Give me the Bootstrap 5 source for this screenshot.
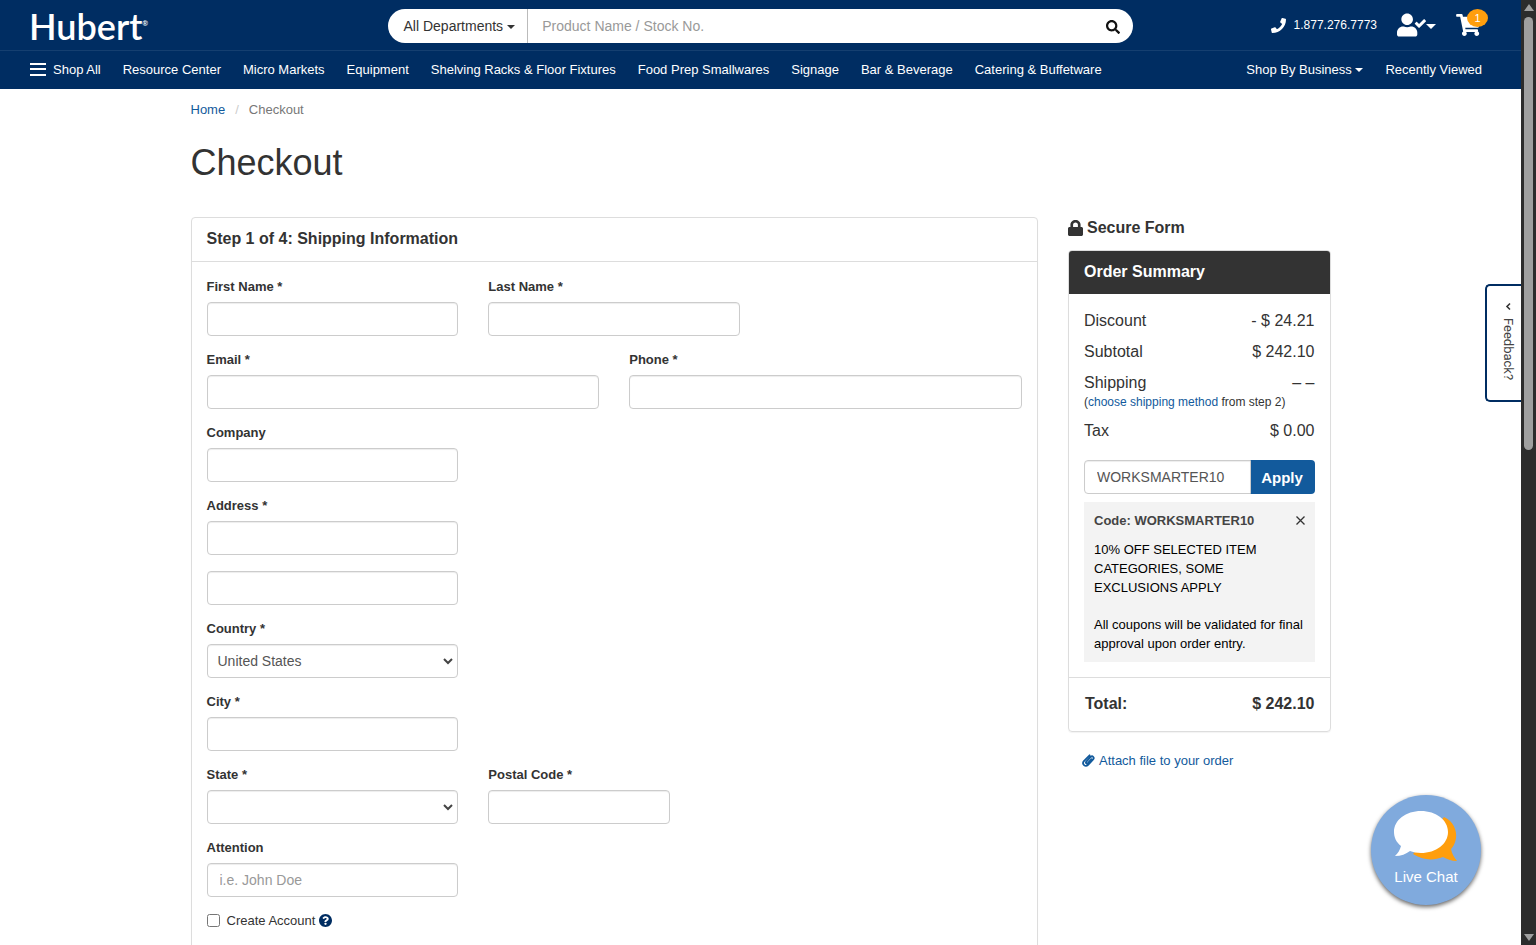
<!DOCTYPE html>
<html lang="en">
<head>
<meta charset="utf-8">
<meta name="viewport" content="width=device-width, initial-scale=1">
<title>Checkout | Hubert</title>
<link href="https://cdn.jsdelivr.net/npm/bootstrap@5.3.0/dist/css/bootstrap.min.css" rel="stylesheet">
<style>
:root { --navy: #002d62; --link: #125a9c; --ink: #333; }
body { font-family: "Liberation Sans", Arial, sans-serif; font-size: 13px; line-height: 19px; color: var(--ink); }
a { color: var(--link); text-decoration: none; }
svg { flex-shrink: 0; }
.shell-view { min-width: 0; }

/* header */
.site-head { background: var(--navy); color: #fff; }
.site-head a, .site-head .plain-btn { color: #fff; }
.head-top { height: 51px; border-bottom: 1px solid #153f70; }
.brand { font-family: Lato, sans-serif; font-weight: 600; font-size: 36px; line-height: 52px; padding-left: 21px; }
.brand sup { font-size: 7px; top: -14px; }
.plain-btn { background: none; border: 0; padding: 0; }
.search-bar { height: 34px; border-radius: 17px; background: #fff; overflow: hidden; }
.search-bar .dept-btn { width: 140px; font-size: 14px; color: var(--ink); border-right: 1px solid #bbb; padding-left: 3px; }
.search-bar input { border: 0; font-size: 14px; padding: 0 14px; height: 34px; }
.search-bar input::placeholder, .field::placeholder { color: #999; opacity: 1; }
.search-bar .go-btn { width: 40px; }
.caret { display: inline-block; border: 4px solid transparent; border-top-color: currentColor; border-bottom: 0; vertical-align: middle; }
.caret-lg { border-width: 5px 5px 0; }
.tools { padding: 0 24px 2px 0; }
.tel-link { font-size: 12px; }
.cart-count { position: absolute; top: -5px; left: 15px; width: 21px; height: 18px; line-height: 18px; border-radius: 50%; background: #ff9e0d; font-size: 11px; text-align: center; }
.head-nav { height: 38px; padding: 0 39px 2px 30px; gap: 22px; white-space: nowrap; }
.bars { width: 16px; height: 13px; margin-right: 7px; border: solid #fff; border-width: 2px 0; background: linear-gradient(#fff, #fff) center / 100% 2px no-repeat; }

/* page */
.page { max-width: 1170px; padding: 0 15px; }
.row-30 { --bs-gutter-x: 30px; }
.crumbs { padding-top: 11px; margin-bottom: 24px; --bs-breadcrumb-item-padding-x: 10px; --bs-breadcrumb-divider-color: #ccc; --bs-breadcrumb-item-active-color: #777; }
h1 { font-size: 36px; line-height: 40px; font-weight: 400; margin-bottom: 34px; }
.panel { border: 1px solid #ddd; border-radius: 4px; box-shadow: 0 1px 1px rgba(0,0,0,.05); }
.panel-top { border-bottom: 1px solid #ddd; padding: 10px 15px 12px; }
.title-md { font-size: 16px; line-height: 21px; font-weight: 700; margin: 0; }
.panel-fields { padding: 15px; }
.group { margin-bottom: 14px; }
.group label { font-weight: 700; display: block; margin-bottom: 6px; }
.field { height: 34px; border: 1px solid #ccc; border-radius: 4px; font-size: 14px; line-height: 20px; color: #555; padding: 6px 12px; box-shadow: inset 0 1px 1px rgba(0,0,0,.075); }
select.field { padding: 6px 30px 6px 10px; background-position: right 3px center; background-size: 12px 12px;
  background-image: url("data:image/svg+xml,%3Csvg xmlns='http://www.w3.org/2000/svg' viewBox='0 0 12 12'%3E%3Cpath d='M2 4l4 4 4-4' fill='none' stroke='%23444' stroke-width='2'/%3E%3C/svg%3E"); }
.tick { width: 13px; height: 13px; margin: 0 7px 0 0; }

/* summary */
.secure { padding-bottom: 12px; gap: 4px; }
.summary-top { background: var(--ink); color: #fff; padding: 10px 15px 12px; border-radius: 3px 3px 0 0; }
.sum-line { font-size: 16px; line-height: 21px; margin-bottom: 10px; }
.sum-body { padding: 16px 15px 15px; }
.note-line { font-size: 12px; line-height: 17px; margin: -9px 0 9px; }
.code-entry { margin-top: 19px; }
.apply-btn { background: var(--link); color: #fff; border: 0; border-radius: 4px; font-size: 15px; font-weight: 700; width: 65px; }
.coupon { background: #f3f3f3; color: #000; margin-top: 8px; padding: 9px 10px; }
.coupon-top { color: #444; margin-bottom: 10px; }
.coupon-text { margin-bottom: 18px; }
.sum-total { border-top: 1px solid #ddd; padding: 15px 15px 17px 16px; }
.attach { padding: 19px 14px; gap: 4px; }

/* floating parts */
.feedback-tab { position: absolute; right: 15px; top: 284px; width: 36px; height: 118px; border: 2px solid var(--navy); border-right: 0; border-radius: 5px 0 0 5px; background: #fff; color: #444; font-family: Roboto, sans-serif; font-size: 13px; writing-mode: vertical-rl; padding: 16px 0 0 8px; gap: 7px; }
.chat-btn { position: absolute; right: 55px; bottom: 40px; width: 110px; height: 110px; border: 0; border-radius: 50%; background: #80aadd; color: #fff; font-size: 15px; box-shadow: 0 2px 4px rgba(0,0,0,.6); padding: 0 0 4px; }
.scroll-rail { width: 15px; background: #2c2c2c; padding: 0 0 4px; }
.scroll-thumb { width: 9px; height: 46%; background: #9f9f9f; border-radius: 5px; margin-top: 6px; }
.tri { border: solid transparent; border-width: 0 5px 7px; border-bottom-color: #9f9f9f; }
.tri-down { border-width: 7px 5px 0; border-top-color: #9f9f9f; }
</style>
</head>
<body>
<div class="d-flex vh-100 overflow-hidden position-relative">
<div class="shell-view flex-grow-1 overflow-hidden">
  <header class="site-head">
    <div class="head-top row gx-3 mx-0 align-items-center">
      <div class="col-3"><a href="#" class="brand d-block">Hubert<sup>®</sup></a></div>
      <div class="col-6">
        <form class="search-bar d-flex">
          <button type="button" class="plain-btn dept-btn flex-shrink-0">All Departments <span class="caret"></span></button>
          <input type="text" class="flex-grow-1" placeholder="Product Name / Stock No." aria-label="Product Name / Stock No.">
          <button type="button" class="plain-btn go-btn" aria-label="Search"><svg width="14" height="14" viewBox="0 0 512 512" fill="#111"><path d="M505 442.700L405.300 343c-4.500-4.500-10.600-7-17-7H372c27.600-35.300 44-79.700 44-128C416 93.100 322.900 0 208 0S0 93.100 0 208s93.100 208 208 208c48.300 0 92.700-16.400 128-44v16.300c0 6.400 2.500 12.500 7 17l99.700 99.700c9.400 9.400 24.600 9.400 33.900 0l28.300-28.300c9.400-9.400 9.400-24.600.1-34zM208 336c-70.700 0-128-57.200-128-128 0-70.700 57.200-128 128-128 70.700 0 128 57.200 128 128 0 70.700-57.200 128-128 128z"/></svg></button>
        </form>
      </div>
      <div class="col-3">
        <div class="tools d-flex justify-content-end align-items-center">
          <a href="#" class="tel-link d-flex align-items-center gap-2"><svg width="15" height="15" viewBox="0 0 512 512" fill="#fff"><path d="M493.400 24.600l-104-24c-11.300-2.600-22.900 3.300-27.500 13.900l-48 112c-4.200 9.800-1.400 21.300 6.900 28l60.600 49.600c-36 76.700-98.900 140.500-177.200 177.200l-49.600-60.600c-6.800-8.300-18.200-11.100-28-6.900l-112 48C3.900 366.500-2 378.100.6 389.400l24 104C27.100 504.200 36.700 512 48 512c256.100 0 464-207.500 464-464 0-11.200-7.700-20.900-18.600-23.400z"/></svg>1.877.276.7773</a>
          <button type="button" class="plain-btn d-flex align-items-end ms-3 ps-1" aria-label="Account"><svg width="29" height="24" viewBox="0 0 640 512" fill="#fff"><path d="M224 256c70.700 0 128-57.300 128-128S294.700 0 224 0 96 57.300 96 128s57.300 128 128 128zm89.600 32h-16.700c-22.200 10.200-46.900 16-72.900 16s-50.600-5.800-72.900-16h-16.700C60.200 288 0 348.200 0 422.400V464c0 26.500 21.500 48 48 48h352c26.500 0 48-21.500 48-48v-41.600c0-74.200-60.200-134.400-134.400-134.400zM636.600 159.600l-27.800-28.200c-4.700-4.700-12.300-4.700-17 0l-104.800 104-45.500-45.800c-4.700-4.700-12.300-4.700-17 0l-28.100 27.900c-4.700 4.700-4.700 12.300 0 17l81.700 82.300c4.700 4.700 12.300 4.700 17 0l141.300-140.200c4.600-4.700 4.700-12.300.2-17z"/></svg><span class="caret caret-lg mb-2"></span></button>
          <a href="#" class="position-relative ms-3 ps-1 me-2 d-block" aria-label="Cart"><svg class="d-block" width="25" height="22" viewBox="0 0 576 512" fill="#fff"><path d="M528.120 301.319l47.273-208C578.806 78.301 567.391 64 551.990 64H159.208l-9.166-44.810C147.758 8.021 137.930 0 126.529 0H24C10.745 0 0 10.745 0 24v16c0 13.255 10.745 24 24 24h69.883l70.248 343.435C147.325 417.100 136 435.222 136 456c0 30.928 25.072 56 56 56s56-25.072 56-56c0-15.674-6.447-29.835-16.824-40h209.647C430.447 426.165 424 440.326 424 456c0 30.928 25.072 56 56 56s56-25.072 56-56c0-22.172-12.888-41.332-31.579-50.405l5.517-24.276c3.413-15.018-8.002-29.319-23.403-29.319H218.117l-6.545-32h293.145c11.206 0 20.920-7.754 23.403-18.681z"/></svg><span class="cart-count">1</span></a>
        </div>
      </div>
    </div>
    <nav class="head-nav d-flex align-items-center">
      <a href="#" class="d-flex align-items-center"><span class="bars"></span>Shop All</a>
      <a href="#">Resource Center</a>
      <a href="#">Micro Markets</a>
      <a href="#">Equipment</a>
      <a href="#">Shelving Racks &amp; Floor Fixtures</a>
      <a href="#">Food Prep Smallwares</a>
      <a href="#">Signage</a>
      <a href="#">Bar &amp; Beverage</a>
      <a href="#">Catering &amp; Buffetware</a>
      <button type="button" class="plain-btn ms-auto">Shop By Business <span class="caret"></span></button>
      <a href="#">Recently Viewed</a>
    </nav>
  </header>

  <main class="page mx-auto">
    <ol class="breadcrumb crumbs">
      <li class="breadcrumb-item"><a href="#">Home</a></li>
      <li class="breadcrumb-item active" aria-current="page">Checkout</li>
    </ol>
    <h1>Checkout</h1>
    <div class="row row-30">
      <div class="col-9">
        <form class="panel">
          <div class="panel-top"><h2 class="title-md">Step 1 of 4: Shipping Information</h2></div>
          <div class="panel-fields">
            <div class="row row-30">
              <div class="col-4 group"><label for="fn">First Name *</label><input id="fn" type="text" class="form-control field"></div>
              <div class="col-4 group"><label for="ln">Last Name *</label><input id="ln" type="text" class="form-control field"></div>
            </div>
            <div class="row row-30">
              <div class="col-6 group"><label for="em">Email *</label><input id="em" type="email" class="form-control field"></div>
              <div class="col-6 group"><label for="ph">Phone *</label><input id="ph" type="tel" class="form-control field"></div>
            </div>
            <div class="row row-30"><div class="col-4 group"><label for="co">Company</label><input id="co" type="text" class="form-control field"></div></div>
            <div class="row row-30"><div class="col-4 group mb-3"><label for="ad">Address *</label><input id="ad" type="text" class="form-control field"></div></div>
            <div class="row row-30"><div class="col-4 group"><input type="text" class="form-control field" aria-label="Address line 2"></div></div>
            <div class="row row-30"><div class="col-4 group"><label for="cn">Country *</label><select id="cn" class="form-select field"><option>United States</option></select></div></div>
            <div class="row row-30"><div class="col-4 group"><label for="ci">City *</label><input id="ci" type="text" class="form-control field"></div></div>
            <div class="row row-30">
              <div class="col-4 group"><label for="st">State *</label><select id="st" class="form-select field"><option></option></select></div>
              <div class="col-3 group"><label for="pc">Postal Code *</label><input id="pc" type="text" class="form-control field"></div>
            </div>
            <div class="row row-30"><div class="col-4 group"><label for="at">Attention</label><input id="at" type="text" class="form-control field" placeholder="i.e. John Doe"></div></div>
            <div class="d-flex align-items-center group">
              <input type="checkbox" class="tick" id="ca"><label for="ca" class="fw-normal mb-0 me-1">Create Account</label>
              <svg width="13" height="13" viewBox="8 8 496 496" fill="#002d62"><path d="M504 256c0 136.997-111.043 248-248 248S8 392.997 8 256C8 119.083 119.043 8 256 8s248 111.083 248 248zM262.655 90c-54.497 0-89.255 22.957-116.549 63.758-3.536 5.286-2.353 12.415 2.715 16.258l34.699 26.310c5.205 3.947 12.621 3.008 16.665-2.122 17.864-22.658 30.113-35.797 57.303-35.797 20.429 0 45.698 13.148 45.698 32.958 0 14.976-12.363 22.667-32.534 33.976C247.128 238.528 216 254.941 216 296v4c0 6.627 5.373 12 12 12h56c6.627 0 12-5.373 12-12v-1.333c0-28.462 83.186-29.647 83.186-106.667 0-58.002-60.165-102-116.531-102zM256 338c-25.365 0-46 20.635-46 46 0 25.364 20.635 46 46 46s46-20.636 46-46c0-25.365-20.635-46-46-46z"/></svg>
            </div>
          </div>
        </form>
      </div>
      <aside class="col-3">
        <div class="secure d-flex align-items-center"><svg width="15" height="16" viewBox="0 0 448 512" preserveAspectRatio="none" fill="#333"><path d="M400 224h-24v-72C376 68.200 307.800 0 224 0S72 68.200 72 152v72H48c-26.500 0-48 21.500-48 48v192c0 26.500 21.500 48 48 48h352c26.500 0 48-21.500 48-48V272c0-26.500-21.500-48-48-48zm-104 0H152v-72c0-39.700 32.300-72 72-72s72 32.300 72 72v72z"/></svg><h2 class="title-md">Secure Form</h2></div>
        <div class="panel">
          <div class="summary-top"><h2 class="title-md">Order Summary</h2></div>
          <div class="sum-body">
            <div class="sum-line d-flex justify-content-between"><span>Discount</span><span>- $ 24.21</span></div>
            <div class="sum-line d-flex justify-content-between"><span>Subtotal</span><span>$ 242.10</span></div>
            <div class="sum-line d-flex justify-content-between"><span>Shipping</span><span>– –</span></div>
            <div class="note-line">(<a href="#">choose shipping method</a> from step 2)</div>
            <div class="sum-line d-flex justify-content-between"><span>Tax</span><span>$ 0.00</span></div>
            <div class="input-group code-entry">
              <input type="text" class="form-control field" value="WORKSMARTER10" aria-label="Coupon code">
              <button type="button" class="apply-btn">Apply</button>
            </div>
            <div class="coupon">
              <div class="coupon-top d-flex justify-content-between align-items-center"><strong>Code: WORKSMARTER10</strong><button type="button" class="plain-btn d-flex" aria-label="Remove coupon"><svg width="9" height="9" viewBox="0 0 9 9" stroke="#333" stroke-width="1.300"><path d="M0.500 0.500l8 8M8.500 0.500l-8 8"/></svg></button></div>
              <p class="coupon-text">10% OFF SELECTED ITEM CATEGORIES, SOME EXCLUSIONS APPLY</p>
              <p class="mb-0">All coupons will be validated for final approval upon order entry.</p>
            </div>
          </div>
          <div class="sum-total title-md d-flex justify-content-between"><span>Total:</span><span>$ 242.10</span></div>
        </div>
        <a href="#" class="attach d-flex align-items-center"><svg width="13" height="13" viewBox="0 0 13 13" fill="none" stroke="#125a9c" stroke-width="1.800" stroke-linecap="round"><path d="M9.500 5.200L5.800 9.200c-1 1-2.500-.4-1.500-1.500L8.600 3c1.800-1.700 4.200.4 2.500 2.400l-5 5.500c-2.800 2.600-6.600-.8-4.200-3.800L7.600 1.300"/></svg>Attach file to your order</a>
      </aside>
    </div>
  </main>
</div>
<div class="scroll-rail d-flex flex-column align-items-center flex-shrink-0" aria-hidden="true"><span class="tri mt-1"></span><span class="scroll-thumb"></span><span class="tri tri-down mt-auto"></span></div>
<button type="button" class="feedback-tab d-flex align-items-center"><svg width="7" height="9" viewBox="0 0 7 9" fill="none" stroke="#333" stroke-width="1.600"><path d="M5 1.500L2 4.500l3 3"/></svg>Feedback?</button>
<button type="button" class="chat-btn d-flex flex-column align-items-center justify-content-center"><svg width="64" height="53" viewBox="0 0 64 53"><path fill="#ff9e0d" d="M50 7c9 4 13 13 12 21-1 6-3 9-5 11 1 5 3 8 6 12-6 0-10-2-14-4-10 4-21 3-30-3z"/><path fill="#fff" d="M27 1c15 0 27 9 27 21S42 43 27 43c-4 0-8-1-11-2-4 3-9 5-15 5 3-3 5-6 6-10-5-4-7-9-7-14C0 10 12 1 27 1z"/></svg><span class="mt-1">Live Chat</span></button>
</div>
<script src="https://cdn.jsdelivr.net/npm/bootstrap@5.3.0/dist/js/bootstrap.bundle.min.js"></script>
</body>
</html>
